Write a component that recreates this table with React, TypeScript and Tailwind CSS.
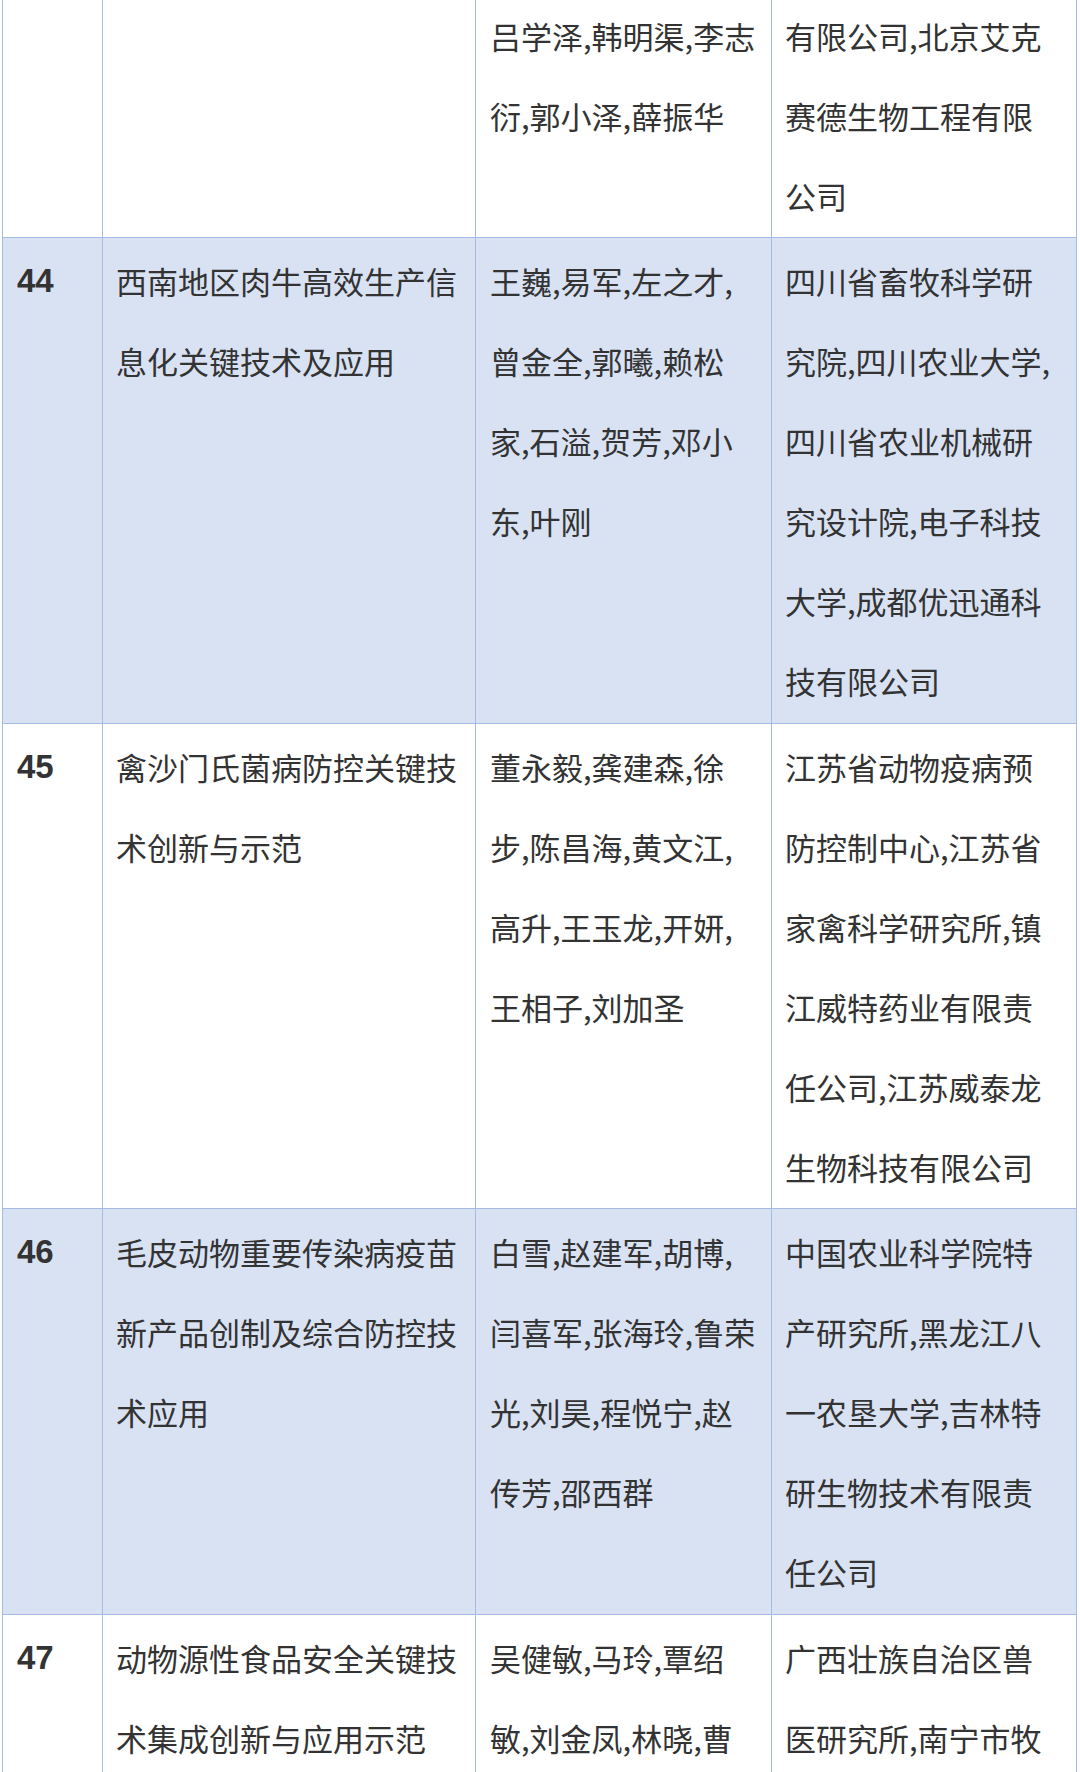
import React from "react";

type Row = {
  no?: string;
  title: string[];
  people: string[];
  orgs: string[];
  shaded: boolean;
};

const rows: Row[] = [
  {
    title: [],
    people: ["吕学泽,韩明渠,李志", "衍,郭小泽,薛振华"],
    orgs: ["有限公司,北京艾克", "赛德生物工程有限", "公司"],
    shaded: false,
  },
  {
    no: "44",
    title: ["西南地区肉牛高效生产信", "息化关键技术及应用"],
    people: ["王巍,易军,左之才,", "曾金全,郭曦,赖松", "家,石溢,贺芳,邓小", "东,叶刚"],
    orgs: [
      "四川省畜牧科学研",
      "究院,四川农业大学,",
      "四川省农业机械研",
      "究设计院,电子科技",
      "大学,成都优迅通科",
      "技有限公司",
    ],
    shaded: true,
  },
  {
    no: "45",
    title: ["禽沙门氏菌病防控关键技", "术创新与示范"],
    people: ["董永毅,龚建森,徐", "步,陈昌海,黄文江,", "高升,王玉龙,开妍,", "王相子,刘加圣"],
    orgs: [
      "江苏省动物疫病预",
      "防控制中心,江苏省",
      "家禽科学研究所,镇",
      "江威特药业有限责",
      "任公司,江苏威泰龙",
      "生物科技有限公司",
    ],
    shaded: false,
  },
  {
    no: "46",
    title: ["毛皮动物重要传染病疫苗", "新产品创制及综合防控技", "术应用"],
    people: ["白雪,赵建军,胡博,", "闫喜军,张海玲,鲁荣", "光,刘昊,程悦宁,赵", "传芳,邵西群"],
    orgs: ["中国农业科学院特", "产研究所,黑龙江八", "一农垦大学,吉林特", "研生物技术有限责", "任公司"],
    shaded: true,
  },
  {
    no: "47",
    title: ["动物源性食品安全关键技", "术集成创新与应用示范"],
    people: ["吴健敏,马玲,覃绍", "敏,刘金凤,林晓,曹"],
    orgs: ["广西壮族自治区兽", "医研究所,南宁市牧"],
    shaded: false,
  },
];

function Lines({ lines }: { lines: string[] }) {
  return (
    <>
      {lines.map((l, i) => (
        <div key={i} className="whitespace-nowrap">
          {l}
        </div>
      ))}
    </>
  );
}

export default function App() {
  return (
    <div
      className="w-[1080px] h-[1772px] overflow-hidden bg-white text-[#333333] text-[31px] leading-[80px]"
      style={{ fontFamily: '"Noto Sans CJK SC", "Noto Sans", sans-serif' }}
    >
      <div className="ml-[2px] -mt-[8.5px] w-[1075px] border-l border-t border-[#a6bbe3]">
        {rows.map((r, i) => (
          <div
            key={i}
            className={`flex border-b border-[#a6bbe3] ${r.shaded ? "bg-[#d9e2f3]" : "bg-white"}`}
          >
            <div className="w-[100px] shrink-0 border-r border-[#a6bbe3] pl-[14px] pt-[3px] pb-[1.5px]">
              {r.no && (
                <div
                  className="text-[33px] font-bold text-[#333333]"
                  style={{ fontFamily: '"Liberation Sans", Arial, sans-serif' }}
                >
                  {r.no}
                </div>
              )}
            </div>
            <div className="w-[373px] shrink-0 border-r border-[#a6bbe3] pl-[13px] pt-[3px] pb-[1.5px]">
              <Lines lines={r.title} />
            </div>
            <div className="w-[296px] shrink-0 border-r border-[#a6bbe3] pl-[14px] pt-[3px] pb-[1.5px]">
              <Lines lines={r.people} />
            </div>
            <div className="w-[305px] shrink-0 border-r border-[#a6bbe3] pl-[13px] pt-[3px] pb-[1.5px]">
              <Lines lines={r.orgs} />
            </div>
          </div>
        ))}
      </div>
    </div>
  );
}
